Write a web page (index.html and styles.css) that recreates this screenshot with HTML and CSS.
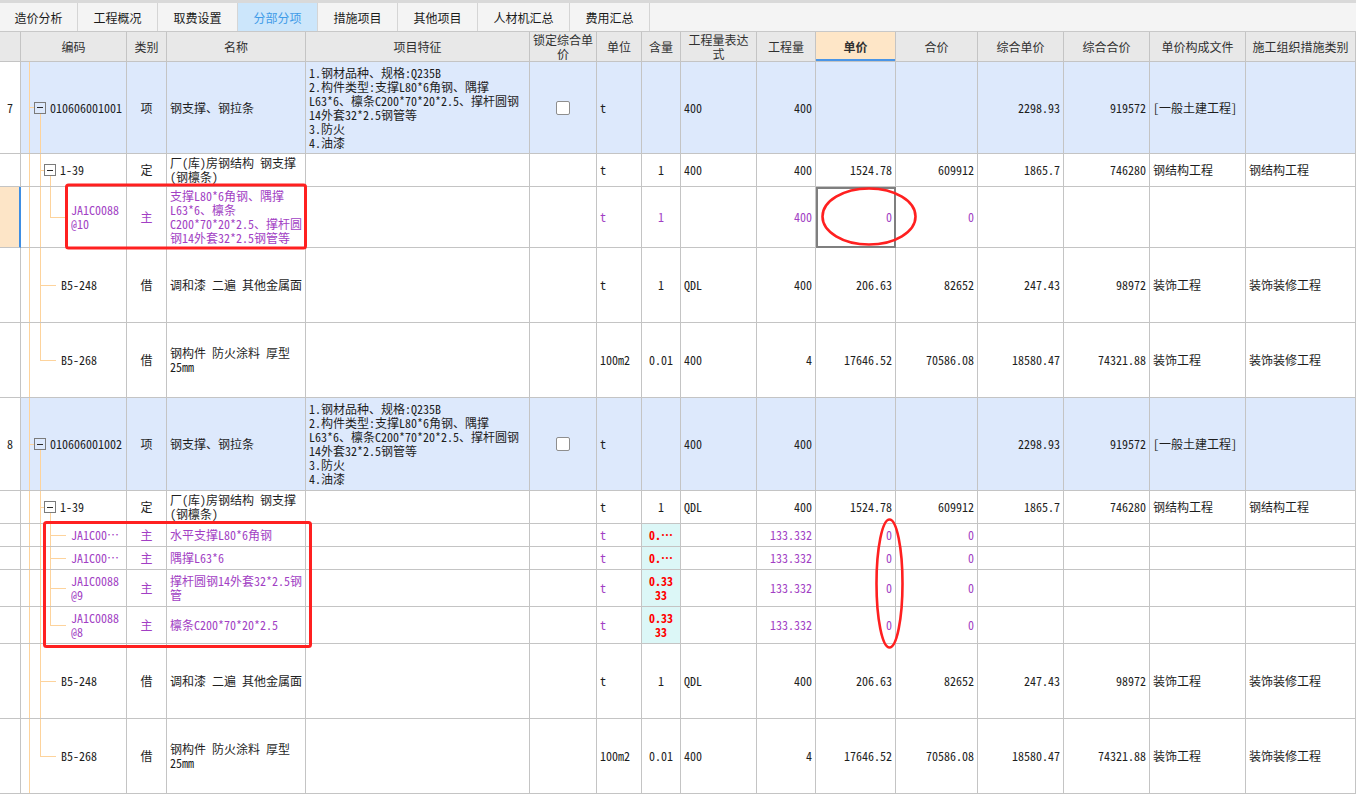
FILE: index.html
```html
<!DOCTYPE html>
<html lang="zh-CN">
<head>
<meta charset="utf-8">
<title>分部分项</title>
<link rel="stylesheet" href="styles.css">
</head>
<body>
<div class="topline"></div>
<div class="tabs">
  <div class="tab w78">造价分析</div>
  <div class="tab">工程概况</div>
  <div class="tab">取费设置</div>
  <div class="tab on">分部分项</div>
  <div class="tab">措施项目</div>
  <div class="tab">其他项目</div>
  <div class="tab w92">人材机汇总</div>
  <div class="tab">费用汇总</div>
</div>

<div class="grid">
  <div class="row head">
    <div class="c"></div>
    <div class="c">编码</div>
    <div class="c">类别</div>
    <div class="c">名称</div>
    <div class="c">项目特征</div>
    <div class="c"><span>锁定综合单<br>价</span></div>
    <div class="c">单位</div>
    <div class="c">含量</div>
    <div class="c"><span>工程量表达<br>式</span></div>
    <div class="c">工程量</div>
    <div class="c hl">单价</div>
    <div class="c">合价</div>
    <div class="c">综合单价</div>
    <div class="c">综合合价</div>
    <div class="c">单价构成文件</div>
    <div class="c">施工组织措施类别</div>
  </div>

  <!-- 7 -->
  <div class="row h92 item">
    <div class="c ctr no">7</div>
    <div class="c t-item"><span class="box"></span>010606001001</div>
    <div class="c ctr">项</div>
    <div class="c">钢支撑、钢拉条</div>
    <div class="c"><span>1.钢材品种、规格:Q235B<br>2.构件类型:支撑L80*6角钢、隅撑<br>L63*6、檩条C200*70*20*2.5、撑杆圆钢<br>14外套32*2.5钢管等<br>3.防火<br>4.油漆</span></div>
    <div class="c ctr"><span class="chk"></span></div>
    <div class="c">t</div>
    <div class="c ctr"></div>
    <div class="c">400</div>
    <div class="c r">400</div>
    <div class="c r"></div>
    <div class="c r"></div>
    <div class="c r">2298.93</div>
    <div class="c r">919572</div>
    <div class="c">[一般土建工程]</div>
    <div class="c"></div>
  </div>
  <div class="row h33">
    <div class="c"></div>
    <div class="c t-def"><span class="box"></span>1-39</div>
    <div class="c ctr">定</div>
    <div class="c"><span>厂(库)房钢结构 钢支撑<br>(钢檩条)</span></div>
    <div class="c"></div>
    <div class="c"></div>
    <div class="c">t</div>
    <div class="c ctr">1</div>
    <div class="c">400</div>
    <div class="c r">400</div>
    <div class="c r">1524.78</div>
    <div class="c r">609912</div>
    <div class="c r">1865.7</div>
    <div class="c r">746280</div>
    <div class="c">钢结构工程</div>
    <div class="c">钢结构工程</div>
  </div>
  <div class="row h61 p">
    <div class="c sel"></div>
    <div class="c t-main last"><span>JA1C0088<br>@10</span></div>
    <div class="c ctr">主</div>
    <div class="c"><span>支撑L80*6角钢、隅撑<br>L63*6、檩条<br>C200*70*20*2.5、撑杆圆<br>钢14外套32*2.5钢管等</span></div>
    <div class="c"></div>
    <div class="c"></div>
    <div class="c">t</div>
    <div class="c ctr">1</div>
    <div class="c"></div>
    <div class="c r">400</div>
    <div class="c r cur">0</div>
    <div class="c r">0</div>
    <div class="c r"></div>
    <div class="c r"></div>
    <div class="c"></div>
    <div class="c"></div>
  </div>
  <div class="row h75">
    <div class="c"></div>
    <div class="c t-bor">B5-248</div>
    <div class="c ctr">借</div>
    <div class="c">调和漆 二遍 其他金属面</div>
    <div class="c"></div>
    <div class="c"></div>
    <div class="c">t</div>
    <div class="c ctr">1</div>
    <div class="c">QDL</div>
    <div class="c r">400</div>
    <div class="c r">206.63</div>
    <div class="c r">82652</div>
    <div class="c r">247.43</div>
    <div class="c r">98972</div>
    <div class="c">装饰工程</div>
    <div class="c">装饰装修工程</div>
  </div>
  <div class="row h75">
    <div class="c"></div>
    <div class="c t-bor last">B5-268</div>
    <div class="c ctr">借</div>
    <div class="c"><span>钢构件 防火涂料 厚型<br><small>25mm</small></span></div>
    <div class="c"></div>
    <div class="c"></div>
    <div class="c">100m2</div>
    <div class="c ctr">0.01</div>
    <div class="c">400</div>
    <div class="c r">4</div>
    <div class="c r">17646.52</div>
    <div class="c r">70586.08</div>
    <div class="c r">18580.47</div>
    <div class="c r">74321.88</div>
    <div class="c">装饰工程</div>
    <div class="c">装饰装修工程</div>
  </div>

  <!-- 8 -->
  <div class="row h93 item">
    <div class="c ctr no">8</div>
    <div class="c t-item"><span class="box"></span>010606001002</div>
    <div class="c ctr">项</div>
    <div class="c">钢支撑、钢拉条</div>
    <div class="c"><span>1.钢材品种、规格:Q235B<br>2.构件类型:支撑L80*6角钢、隅撑<br>L63*6、檩条C200*70*20*2.5、撑杆圆钢<br>14外套32*2.5钢管等<br>3.防火<br>4.油漆</span></div>
    <div class="c ctr"><span class="chk"></span></div>
    <div class="c">t</div>
    <div class="c ctr"></div>
    <div class="c">400</div>
    <div class="c r">400</div>
    <div class="c r"></div>
    <div class="c r"></div>
    <div class="c r">2298.93</div>
    <div class="c r">919572</div>
    <div class="c">[一般土建工程]</div>
    <div class="c"></div>
  </div>
  <div class="row h33">
    <div class="c"></div>
    <div class="c t-def"><span class="box"></span>1-39</div>
    <div class="c ctr">定</div>
    <div class="c"><span>厂(库)房钢结构 钢支撑<br>(钢檩条)</span></div>
    <div class="c"></div>
    <div class="c"></div>
    <div class="c">t</div>
    <div class="c ctr">1</div>
    <div class="c">QDL</div>
    <div class="c r">400</div>
    <div class="c r">1524.78</div>
    <div class="c r">609912</div>
    <div class="c r">1865.7</div>
    <div class="c r">746280</div>
    <div class="c">钢结构工程</div>
    <div class="c">钢结构工程</div>
  </div>
  <div class="row h23 p">
    <div class="c"></div>
    <div class="c t-main">JA1C00…</div>
    <div class="c ctr">主</div>
    <div class="c">水平支撑L80*6角钢</div>
    <div class="c"></div>
    <div class="c"></div>
    <div class="c">t</div>
    <div class="c ctr qty">0.…</div>
    <div class="c"></div>
    <div class="c r">133.332</div>
    <div class="c r">0</div>
    <div class="c r">0</div>
    <div class="c r"></div>
    <div class="c r"></div>
    <div class="c"></div>
    <div class="c"></div>
  </div>
  <div class="row h23 p">
    <div class="c"></div>
    <div class="c t-main">JA1C00…</div>
    <div class="c ctr">主</div>
    <div class="c">隅撑L63*6</div>
    <div class="c"></div>
    <div class="c"></div>
    <div class="c">t</div>
    <div class="c ctr qty">0.…</div>
    <div class="c"></div>
    <div class="c r">133.332</div>
    <div class="c r">0</div>
    <div class="c r">0</div>
    <div class="c r"></div>
    <div class="c r"></div>
    <div class="c"></div>
    <div class="c"></div>
  </div>
  <div class="row h37 p">
    <div class="c"></div>
    <div class="c t-main"><span>JA1C0088<br>@9</span></div>
    <div class="c ctr">主</div>
    <div class="c"><span>撑杆圆钢14外套32*2.5钢<br>管</span></div>
    <div class="c"></div>
    <div class="c"></div>
    <div class="c">t</div>
    <div class="c ctr qty"><span>0.33<br>33</span></div>
    <div class="c"></div>
    <div class="c r">133.332</div>
    <div class="c r">0</div>
    <div class="c r">0</div>
    <div class="c r"></div>
    <div class="c r"></div>
    <div class="c"></div>
    <div class="c"></div>
  </div>
  <div class="row h37 p">
    <div class="c"></div>
    <div class="c t-main last"><span>JA1C0088<br>@8</span></div>
    <div class="c ctr">主</div>
    <div class="c">檩条C200*70*20*2.5</div>
    <div class="c"></div>
    <div class="c"></div>
    <div class="c">t</div>
    <div class="c ctr qty"><span>0.33<br>33</span></div>
    <div class="c"></div>
    <div class="c r">133.332</div>
    <div class="c r">0</div>
    <div class="c r">0</div>
    <div class="c r"></div>
    <div class="c r"></div>
    <div class="c"></div>
    <div class="c"></div>
  </div>
  <div class="row h75">
    <div class="c"></div>
    <div class="c t-bor">B5-248</div>
    <div class="c ctr">借</div>
    <div class="c">调和漆 二遍 其他金属面</div>
    <div class="c"></div>
    <div class="c"></div>
    <div class="c">t</div>
    <div class="c ctr">1</div>
    <div class="c">QDL</div>
    <div class="c r">400</div>
    <div class="c r">206.63</div>
    <div class="c r">82652</div>
    <div class="c r">247.43</div>
    <div class="c r">98972</div>
    <div class="c">装饰工程</div>
    <div class="c">装饰装修工程</div>
  </div>
  <div class="row h75">
    <div class="c"></div>
    <div class="c t-bor last">B5-268</div>
    <div class="c ctr">借</div>
    <div class="c"><span>钢构件 防火涂料 厚型<br><small>25mm</small></span></div>
    <div class="c"></div>
    <div class="c"></div>
    <div class="c">100m2</div>
    <div class="c ctr">0.01</div>
    <div class="c">400</div>
    <div class="c r">4</div>
    <div class="c r">17646.52</div>
    <div class="c r">70586.08</div>
    <div class="c r">18580.47</div>
    <div class="c r">74321.88</div>
    <div class="c">装饰工程</div>
    <div class="c">装饰装修工程</div>
  </div>
</div>

<svg class="marks" width="1356" height="794" viewBox="0 0 1356 794">
  <rect x="66.5" y="185" width="239" height="63" rx="2" />
  <ellipse cx="869" cy="216.5" rx="46.5" ry="28" />
  <rect x="44.5" y="522.5" width="266" height="124" rx="2" />
  <ellipse cx="889.5" cy="583.5" rx="13" ry="64" />
</svg>
</body>
</html>
```
FILE: styles.css
```css
* { box-sizing: border-box; margin: 0; padding: 0; }

body {
  width: 1356px;
  height: 794px;
  overflow: hidden;
  position: relative;
  background: #ffffff;
  color: #1e1e1e;
  font-family: "Noto Sans Mono CJK SC", "Noto Sans CJK SC", sans-serif;
  font-size: 12px;
}

.topline { height: 3px; background: #d9d9d9; }

.tabs {
  display: flex;
  height: 29px;
  background: #f4f4f4;
  border-bottom: 1px solid #c8c8c8;
}
.tab {
  width: 80px;
  display: flex;
  align-items: center;
  justify-content: center;
  border-right: 1px solid #d5d5d5;
  color: #1a1a1a;
  font-size: 12px;
}
.tab.w78 { width: 78px; }
.tab.w92 { width: 92px; }
.tab.on { background: #cce6fb; color: #3f9be8; }

.grid { --tl: #fdd39c; --blue: #dde9fc; }

.row {
  display: grid;
  grid-template-columns: 21px 106px 40px 139px 224px 67px 45px 39px 76px 59px 80px 82px 86px 86px 96px 110px;
}
.h92 { height: 92px; }
.h93 { height: 93px; }
.h33 { height: 33px; }
.h61 { height: 61px; }
.h75 { height: 75px; }
.h23 { height: 23px; }
.h37 { height: 37px; }

.c {
  display: flex;
  align-items: center;
  padding: 0 3px;
  border-right: 1px solid #c4c4c4;
  border-bottom: 1px solid #c4c4c4;
  overflow: hidden;
  white-space: nowrap;
  line-height: 14px;
}
.ctr { justify-content: center; text-align: center; }
.r { justify-content: flex-end; text-align: right; }

.head { height: 30px; }
.head .c {
  background: #e8e8e8;
  justify-content: center;
  text-align: center;
  color: #303030;
}
.head .c.hl {
  background: #fee6c7;
  font-weight: bold;
  box-shadow: inset 0 -2px 0 #4a95e6;
}

.item .c { background: var(--blue); }
.item .c.no { background: #ffffff; }

.p .c { color: #a23fc4; }

.sel { background: #fde5c7; border-right: 2px solid #3d8ee4; }
.cur { outline: 2px solid #7f7f7f; outline-offset: -2px; }

.qty { background: #dcf7f7; }
.p .c.qty { color: #ff0000; font-weight: bold; }

small { font-size: 12px; }

.chk {
  width: 14px;
  height: 14px;
  border: 1px solid #8e8e8e;
  border-radius: 2px;
  background: #ffffff;
}

.box {
  flex: none;
  width: 12px;
  height: 12px;
  margin-right: 4px;
  border: 1px solid #7b7b7b;
  background: linear-gradient(#2a2a2a, #2a2a2a) center / 6px 1px no-repeat;
}

/* tree guide lines */
.item .c.t-item {
  padding-left: 13px;
  background:
    linear-gradient(var(--tl), var(--tl)) 8px 0 / 1px 100% no-repeat,
    linear-gradient(var(--tl), var(--tl)) 8px 50% / 5px 1px no-repeat,
    linear-gradient(var(--tl), var(--tl)) 19px 100% / 1px calc(50% - 6px) no-repeat,
    var(--blue);
}
.t-def {
  padding-left: 23px;
  background:
    linear-gradient(var(--tl), var(--tl)) 8px 0 / 1px 100% no-repeat,
    linear-gradient(var(--tl), var(--tl)) 19px 0 / 1px 100% no-repeat,
    linear-gradient(var(--tl), var(--tl)) 19px 50% / 4px 1px no-repeat,
    linear-gradient(var(--tl), var(--tl)) 29px 100% / 1px calc(50% - 6px) no-repeat;
}
.t-main {
  padding-left: 50px;
  background:
    linear-gradient(var(--tl), var(--tl)) 8px 0 / 1px 100% no-repeat,
    linear-gradient(var(--tl), var(--tl)) 19px 0 / 1px 100% no-repeat,
    linear-gradient(var(--tl), var(--tl)) 29px 0 / 1px 100% no-repeat,
    linear-gradient(var(--tl), var(--tl)) 29px 50% / 16px 1px no-repeat;
}
.t-main.last {
  background:
    linear-gradient(var(--tl), var(--tl)) 8px 0 / 1px 100% no-repeat,
    linear-gradient(var(--tl), var(--tl)) 19px 0 / 1px 100% no-repeat,
    linear-gradient(var(--tl), var(--tl)) 29px 0 / 1px 50% no-repeat,
    linear-gradient(var(--tl), var(--tl)) 29px 50% / 16px 1px no-repeat;
}
.t-bor {
  padding-left: 40px;
  background:
    linear-gradient(var(--tl), var(--tl)) 8px 0 / 1px 100% no-repeat,
    linear-gradient(var(--tl), var(--tl)) 19px 0 / 1px 100% no-repeat,
    linear-gradient(var(--tl), var(--tl)) 19px 50% / 16px 1px no-repeat;
}
.t-bor.last {
  background:
    linear-gradient(var(--tl), var(--tl)) 8px 0 / 1px 100% no-repeat,
    linear-gradient(var(--tl), var(--tl)) 19px 0 / 1px 50% no-repeat,
    linear-gradient(var(--tl), var(--tl)) 19px 50% / 16px 1px no-repeat;
}

.marks {
  position: absolute;
  left: 0;
  top: 0;
  pointer-events: none;
}
.marks rect, .marks ellipse {
  fill: none;
  stroke: #ff2020;
  stroke-width: 3;
}
.marks ellipse { stroke-width: 2.6; }
```
